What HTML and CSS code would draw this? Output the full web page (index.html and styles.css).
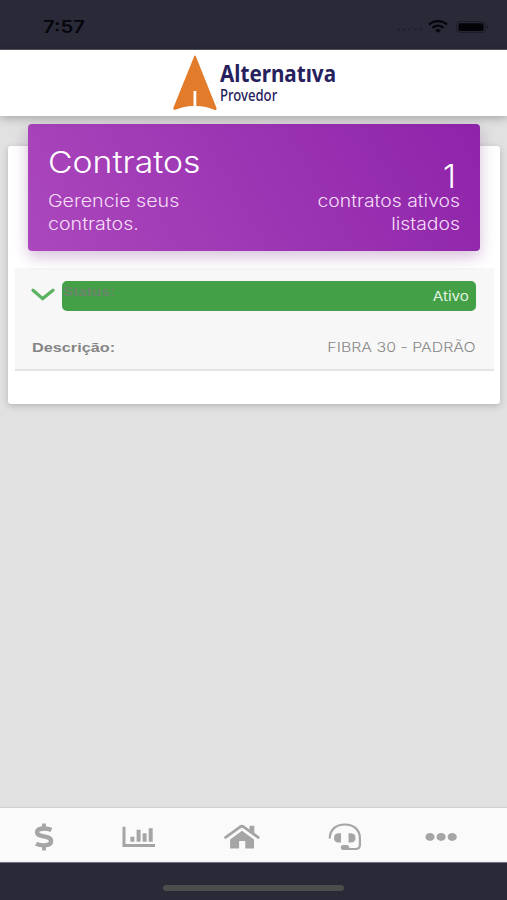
FILE: index.html
```html
<!DOCTYPE html>
<html lang="pt-BR">
<head>
<meta charset="utf-8">
<title>Contratos</title>
<link rel="stylesheet" href="styles.css">
</head>
<body>
<div class="app">
  <div class="statusbar">
    <span class="time"><span class="wide">7:57</span></span>
    <div class="indicators">
      <i class="signal"></i>
      <svg class="wifi" width="20" height="13" viewBox="0 0 20 13"><g fill="none" stroke="#05050c" stroke-width="2.3"><path d="M1 4.6C6-.1 14-.1 19 4.6"/><path d="M4.4 7.9c3.2-3 8-3 11.2 0"/></g><path d="M7 10.2c1.8-1.5 4.2-1.5 6 0l-3 2.6z" fill="#05050c"/></svg>
      <svg class="battery" width="34" height="12" viewBox="0 0 34 12"><rect x=".7" y=".6" width="28.6" height="10.8" rx="3" fill="none" stroke="#1c1c29"/><rect x="2.5" y="2.2" width="25" height="7.8" rx="1.7" fill="#030308"/><path d="M31 4.2q2.3 1.8 0 3.6z" fill="#151520"/></svg>
    </div>
  </div>
  <header class="brandbar">
    <svg class="logo" width="46" height="56" viewBox="0 0 46 56"><path d="M22.4.8Q23 .2 23.7 1L44.6 53.2Q44.7 55.6 42.6 55Q34 51.2 24.3 51V36H21.5V51Q12 51.2 3.4 54.8Q1 55.2 1.3 53Z" fill="#e27c2b"/></svg>
    <div class="brand"><span class="brand-name">Alternatıva</span><span class="brand-sub">Provedor</span></div>
  </header>
  <main class="content">
    <section class="card">
      <div class="card-header">
        <div class="intro"><h1><span class="wide title-text">Contratos</span></h1><p><span class="wide">Gerencie seus<br>contratos.</span></p></div>
        <div class="count"><strong>1</strong><p><span class="wide from-right">contratos ativos<br>listados</span></p></div>
      </div>
      <div class="contract">
        <div class="row status-row">
          <svg class="chevron" width="24" height="13" viewBox="0 0 24 13"><path d="M2 2.2 11.7 10.6 22 2.2" fill="none" stroke="#5bb261" stroke-width="3.2" stroke-linecap="round"/></svg>
          <div class="status"><b class="status-label">Status:</b><span class="status-value">Ativo</span></div>
        </div>
        <div class="row description"><b>Descrição:</b><span class="plan">FIBRA 30 - PADRÃO</span></div>
      </div>
    </section>
  </main>
  <nav class="tabs">
    <a class="tab"><svg width="20" height="28" viewBox="0 0 20 28"><path d="M17.4 7Q14.2 5.5 10.4 5.5C5.6 5.5 3.1 6.7 3.1 9.2c0 5.6 14 2.6 14 8.9 0 3-2.6 4.3-7 4.3q-4.8 0-8-1.8" fill="none" stroke="#a5a5a5" stroke-width="4.4"/><path d="M10 .5v5M10 22v5.5" stroke="#a5a5a5" stroke-width="3.8"/></svg></a>
    <a class="tab"><svg width="34" height="22" viewBox="0 0 34 22"><path d="M2 .8v18.8H33" fill="none" stroke="#a5a5a5" stroke-width="3"/><path d="M10.4 10.7v5M16.6 3.8v11.9M22.6 7.3v8.4M28.7 2.3v13.4" stroke="#a5a5a5" stroke-width="4"/></svg></a>
    <a class="tab"><svg width="36" height="26" viewBox="0 0 36 26"><path d="M1.6 13.4 16.2 2.8q1.7-1.1 3.4 0L34.2 13.4" fill="none" stroke="#a5a5a5" stroke-width="2.8" stroke-linecap="round"/><path d="M25.5 1.8h4.8v9l-4.8-3.5zM18 6.8 30 15.5V24.4H21.3V17h-6.2v7.4H6.1V15.5z" fill="#a5a5a5"/></svg></a>
    <a class="tab"><svg width="34" height="28" viewBox="0 0 34 28"><path d="M1.8 15.4C1.8 6.7 8 1.5 16.8 1.5S31.9 6.7 31.9 15.4V22q0 4-4.4 4H16.8" fill="none" stroke="#a5a5a5" stroke-width="2.2"/><path d="M13 10.2v9.4h-2.8q-4.2-.3-4.2-4.7t4.2-4.7zM20.5 10.2v9.4h2.8q4.2-.3 4.2-4.7t-4.2-4.7z" fill="#a5a5a5"/><rect x="12.8" y="22" width="8.4" height="5" rx="2.5" fill="#a5a5a5"/></svg></a>
    <a class="tab"><svg width="34" height="10" viewBox="0 0 34 10"><g fill="#a5a5a5"><ellipse cx="6" cy="5" rx="4.6" ry="3.9"/><ellipse cx="17.1" cy="5" rx="4.6" ry="3.9"/><ellipse cx="28.2" cy="5" rx="4.6" ry="3.9"/></g></svg></a>
  </nav>
  <div class="home-area"><i class="home-indicator"></i></div>
</div>
</body>
</html>
```
FILE: styles.css
```css
* { box-sizing: border-box; }
body { margin: 0; font-family: "Liberation Sans", Arial, sans-serif; background: #e1e1e1; }
.app { height: 900px; display: flex; flex-direction: column; overflow: hidden; }
h1, p { margin: 0; font-weight: 300; }
.wide { display: inline-block; transform: scaleX(1.155); transform-origin: left; }
.title-text { transform: scaleX(1.125); }
.from-right { transform-origin: right; transform: scaleX(1.14); }

.statusbar { height: 50px; flex: none; display: flex; align-items: center; justify-content: space-between; padding: 4px 17px 0 43px; background: #292938; border-bottom: 1px solid #555562; }
.time { font: 600 17px Inter, sans-serif; color: #05050c; }
.time .wide { transform: scaleX(1.19); }
.indicators { display: flex; align-items: center; }
.signal { width: 25px; margin: 6px 6px 0 0; border-top: 3px dotted #222230; }
.wifi { margin-right: 8px; }

.brandbar { height: 66px; flex: none; display: flex; padding: 5px 0 0 172px; background: #fff; box-shadow: 0 2px 9px rgba(0,0,0,.28); z-index: 1; }
.brand { display: flex; flex-direction: column; align-items: flex-start; padding: 4px 0 0 2px; color: #26215c; white-space: nowrap; }
.brand-name { font: 700 24px/28px "Noto Sans", sans-serif; transform: scaleX(.86); transform-origin: left; }
.brand-sub { font: 500 16px/17px "Noto Sans", sans-serif; transform: scaleX(.82); transform-origin: left; }

.content { flex: 1; padding: 30px 7px 0 8px; }
.card { height: 258px; padding: 0 6px 0 7px; background: #fff; border-radius: 3px; box-shadow: 0 2px 7px rgba(0,0,0,.2); }
.card-header { height: 127px; display: flex; justify-content: space-between; margin: 0 14px 0 13px; padding: 20px; border-radius: 4px; background: linear-gradient(60deg, #ab47bc, #8e24aa); box-shadow: 0 4px 18px rgba(0,0,0,.1), 0 7px 14px rgba(156,39,176,.18); color: #fff; font-family: Inter, sans-serif; transform: translateY(-22px); }
.card-header p { font-size: 17px; line-height: 23px; color: #f5def8; white-space: nowrap; }
.intro h1 { font-size: 30px; line-height: 36px; margin-bottom: 10px; }
.count { display: flex; flex-direction: column; align-items: flex-end; text-align: right; }
.count strong { font-size: 33px; line-height: 29px; font-weight: 300; margin: 18px 4px -1px 0; }

.contract { height: 103px; margin-top: -5px; background: #f7f7f7; border-bottom: 2px solid #e4e4e4; }
.row { display: flex; align-items: center; }
.status-row { padding: 13px 18px 0 16px; }
.chevron { margin-right: 7px; margin-top: -4px; }
.status { flex: 1; height: 30px; display: flex; justify-content: space-between; padding: 0 7px 0 1px; border-radius: 5px; background: #43a047; }
.status-label { font-size: 13px; line-height: 21px; color: #6b856b; transform: scaleX(1.18); transform-origin: left; }
.status-value { font: 400 13px/31px Inter, sans-serif; color: #e3f4e3; transform: scaleX(1.17); transform-origin: right; }
.description { height: 58px; padding: 14px 18px 0 17px; justify-content: space-between; font-size: 13px; color: #858585; }
.description b { transform: scaleX(1.25); transform-origin: left; }
.plan { font: 300 13.5px Inter, sans-serif; color: #888; transform: scaleX(1.18); transform-origin: right; }

.tabs { height: 54px; flex: none; display: flex; align-items: center; gap: 68px; padding: 5px 0 0 34px; background: #fafafa; box-shadow: 0 -1px 1px rgba(0,0,0,.07); border-bottom: 1px solid #eeeef3; }
.tab { display: flex; }
.tab:last-child { margin-left: -6px; }
.home-area { height: 38px; flex: none; display: flex; justify-content: center; padding: 22px 0 0; background: #292938; border-top: 1px solid #737381; }
.home-indicator { width: 181px; height: 6px; border-radius: 3px; background: #4b4e4b; }
```
